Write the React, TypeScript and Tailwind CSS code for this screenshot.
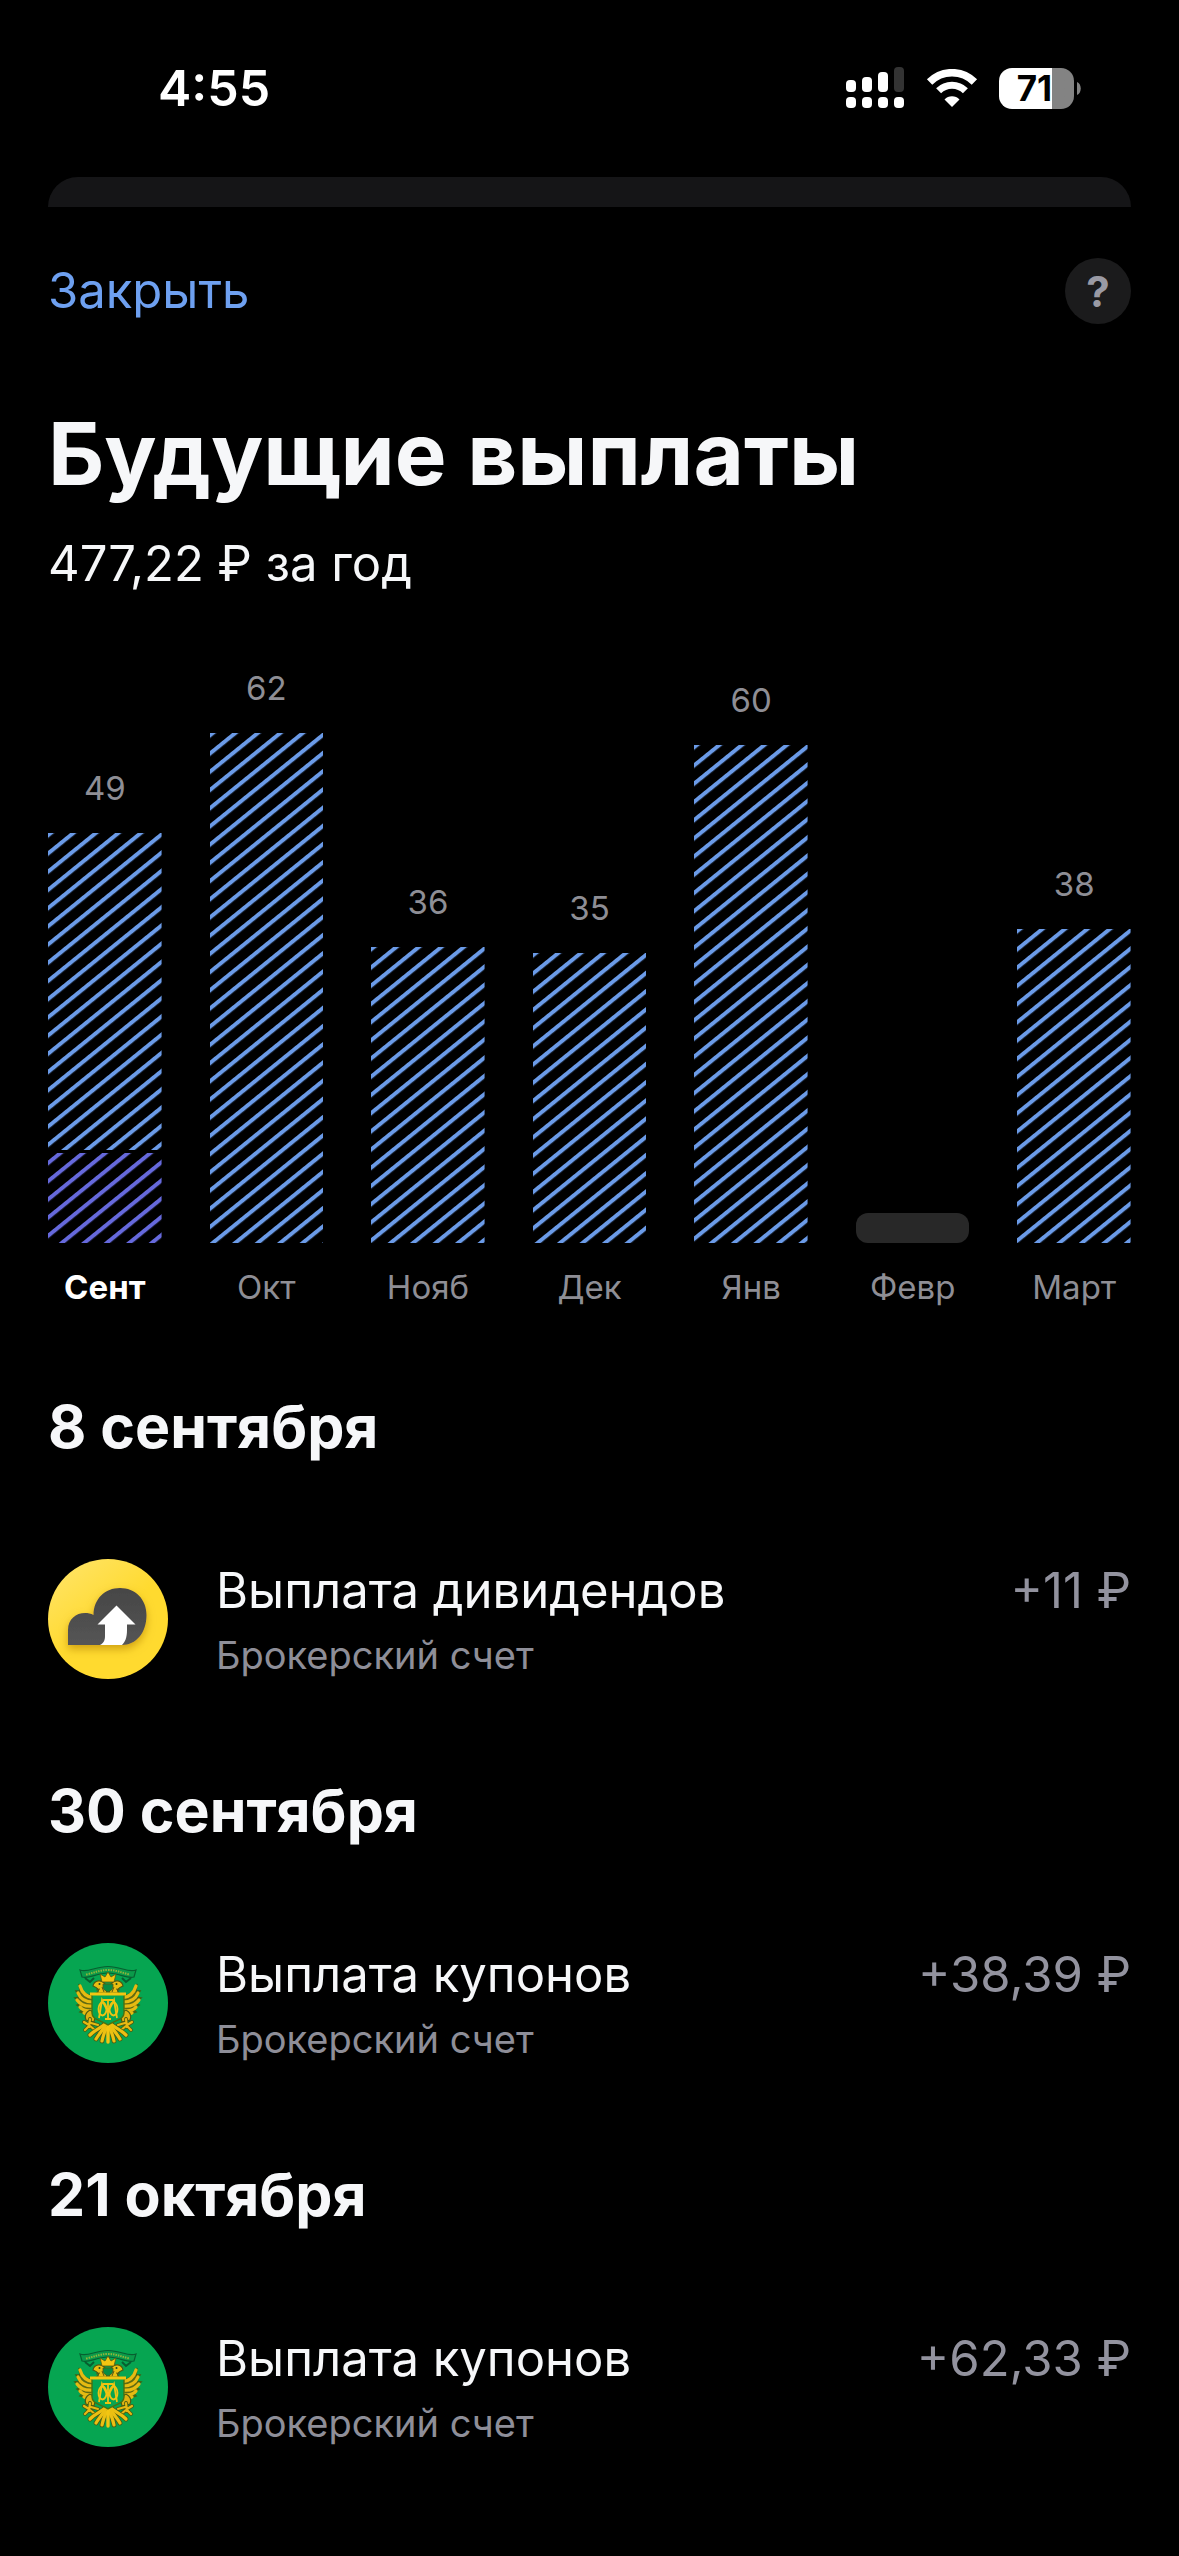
import React from "react";

interface Bar {
  month: string;
  value?: number;
  height: number;
  current?: number;
}

interface Payout {
  date: string;
  title: string;
  account: string;
  amount: string;
  logo: "cloud" | "emblem";
}

const bars: Bar[] = [
  { month: "Сент", value: 49, height: 410, current: 90 },
  { month: "Окт", value: 62, height: 510 },
  { month: "Нояб", value: 36, height: 296 },
  { month: "Дек", value: 35, height: 290 },
  { month: "Янв", value: 60, height: 498 },
  { month: "Февр", height: 30 },
  { month: "Март", value: 38, height: 314 },
];

const payouts: Payout[] = [
  { date: "8 сентября", title: "Выплата дивидендов", account: "Брокерский счет", amount: "+11 ₽", logo: "cloud" },
  { date: "30 сентября", title: "Выплата купонов", account: "Брокерский счет", amount: "+38,39 ₽", logo: "emblem" },
  { date: "21 октября", title: "Выплата купонов", account: "Брокерский счет", amount: "+62,33 ₽", logo: "emblem" },
];

const nextDate = "18 ноября";

function StatusBar() {
  return (
    <div className="flex items-center justify-between pt-14 pl-[158px] pr-[98px]">
      <span className="text-[50px] leading-16 font-semibold text-white">4:55</span>
      <div className="flex items-center gap-[21px]">
        {/* Dual SIM signal */}
        <svg width="59" height="42" viewBox="0 0 59 42" fill="#fff" aria-hidden="true">
          <rect x="0" y="13" width="10" height="12" rx="4" />
          <rect x="16" y="10" width="10" height="15" rx="4" />
          <rect x="32" y="5" width="10" height="20" rx="4" />
          <rect x="48" y="0" width="10" height="25" rx="4" fill="#333" />
          <rect x="0" y="30" width="10" height="11" rx="4" />
          <rect x="16" y="30" width="10" height="11" rx="4" />
          <rect x="32" y="30" width="10" height="11" rx="4" />
          <rect x="48" y="30" width="10" height="11" rx="4" />
        </svg>
        <svg width="52" height="38" viewBox="0 0 52 38" fill="none" stroke="#fff" aria-hidden="true">
          <path d="M3.6 13 A31.5 31.5 0 0 1 48.4 13" strokeWidth="7.5" />
          <path d="M12.6 21.8 A19 19 0 0 1 39.4 21.8" strokeWidth="7" />
          <path d="M26 38 L18.5 30.5 A10.5 10.5 0 0 1 33.5 30.5 Z" fill="#fff" stroke="none" />
        </svg>
        <div className="flex items-center gap-[3px]">
          <div className="flex h-[41px] w-[75px] items-center justify-center rounded-[13px] bg-linear-to-r from-white from-71% to-[#838383] to-71% pr-1">
            <span className="text-[35px] leading-10 font-bold text-black">71</span>
          </div>
          <svg width="4" height="13" viewBox="0 0 4 13" fill="#838383" aria-hidden="true">
            <path d="M0 0 C5 2 5 11 0 13 Z" />
          </svg>
        </div>
      </div>
    </div>
  );
}

function StripedBar({ bar }: { bar: Bar }) {
  const id = `stripes-${bar.value}`;
  const split = bar.height - (bar.current ?? 0);

  return (
    <svg className="w-full" height={bar.height} aria-hidden="true">
      <defs>
        <pattern id={`${id}-blue`} width="60" height="14.15" patternUnits="userSpaceOnUse" patternTransform="translate(0 18) rotate(-39)">
          <rect width="60" height="4" fill="#6b9be8" />
        </pattern>
        <pattern id={`${id}-violet`} width="60" height="14.15" patternUnits="userSpaceOnUse" patternTransform="translate(0 18) rotate(-39)">
          <rect width="60" height="4" fill="#6669dc" />
        </pattern>
      </defs>
      <rect width="100%" height={bar.current ? split - 3 : split} fill={`url(#${id}-blue)`} />
      {bar.current && <rect y={split} width="100%" height={bar.current} fill={`url(#${id}-violet)`} />}
    </svg>
  );
}

function Chart() {
  return (
    <div className="mt-18 flex items-end gap-12">
      {bars.map((bar, i) => (
        <div key={bar.month} className="flex flex-1 flex-col items-center">
          {bar.value && <span className="mb-[25px] text-[33px] leading-10 text-[#8e8e95]">{bar.value}</span>}
          {bar.value ? (
            <StripedBar bar={bar} />
          ) : (
            <div className="h-[30px] w-full rounded-xl bg-[#282828]" />
          )}
          <span className={`mt-6 text-[33px] leading-10 ${i === 0 ? "font-bold text-white" : "text-[#8e8e95]"}`}>
            {bar.month}
          </span>
        </div>
      ))}
    </div>
  );
}

function CloudLogo() {
  return (
    <svg className="size-30 shrink-0" viewBox="0 0 120 120" aria-hidden="true">
      <defs>
        <linearGradient id="cloud-bg" x1="0" y1="0" x2="0.6" y2="0.8">
          <stop offset="0" stopColor="#ffe56e" />
          <stop offset="0.7" stopColor="#ffda2f" />
        </linearGradient>
        <linearGradient id="cloud-fill" x1="0" y1="0" x2="0" y2="1">
          <stop offset="0" stopColor="#464646" />
          <stop offset="1" stopColor="#555" />
        </linearGradient>
        <filter id="cloud-shadow" x="-20%" y="-20%" width="140%" height="160%">
          <feDropShadow dx="0" dy="4" stdDeviation="4" floodColor="#b07c00" floodOpacity="0.6" />
        </filter>
      </defs>
      <circle cx="60" cy="60" r="60" fill="url(#cloud-bg)" />
      <path
        d="M20 86 V71 C20 60 28 54 37 54 C40 54 43 54.5 45.5 56 C45.5 40 57 29 72 29 C87 29 98.5 40 98.5 56 C98.5 74 88 86 74 86 Z"
        fill="url(#cloud-fill)"
        filter="url(#cloud-shadow)"
      />
      <path d="M68.5 46.5 L87.5 65.5 H79 V71 C79 79 77 83 74 86 H52 C56 84 57 81 57 77 V65.5 H49.5 Z" fill="#fff" />
    </svg>
  );
}

function EmblemHalf() {
  return (
    <g>
      {/* Wing */}
      <path
        d="M31 41 L36 50 L43 53 L49 50 V72 L44 75 L39 71 L32 69 L35 66 L29 62 L33 60 L27 55 L32 54 L28 48 L32 48 Z"
        fill="#5f6a12"
        stroke="#3d6414"
        strokeWidth="1.5"
      />
      <g fill="none" stroke="#e6ba12" strokeWidth="3.2" strokeLinecap="round">
        <path d="M46 55 C38 54 34 50 32 43" />
        <path d="M45 59 C37 59 32 55 30 50" />
        <path d="M45 63 C37 64 32 61 29 57" />
        <path d="M45 67 C39 69 34 67 32 64" />
        <path d="M46 71 C43 72 39 72 36 70" />
      </g>
      {/* Head and neck */}
      <path d="M45 43 C46 37 54 36 57 41 L59 50 H49 C52 47 50 45 45 43 Z" fill="#e9bd12" stroke="#4b5a12" strokeWidth="1.2" />
      <path d="M48 47 L52 46 M54 44 L56 49" stroke="#5c5a10" strokeWidth="1" />
      <circle cx="51.5" cy="41" r="1" fill="#1c4a1c" />
      {/* Leg and claws */}
      <path d="M42 67 C47 69 48 74 46 79 L38 77 C36 73 38 69 42 67 Z" fill="#dfb112" stroke="#4b5a12" strokeWidth="1.2" />
      <path d="M42 76 L41 84 M41 82 L36 79 M41 83 L37 87 M42 83 L47 87 M43 80 L50 82" stroke="#4b5a12" strokeWidth="3.8" strokeLinecap="round" fill="none" />
      <path d="M42 76 L41 84 M41 82 L36 79 M41 83 L37 87 M42 83 L47 87 M43 80 L50 82" stroke="#e6b912" strokeWidth="2.2" strokeLinecap="round" fill="none" />
      {/* Tail */}
      <g fill="none" stroke="#4b5a12" strokeWidth="4.8" strokeLinecap="round">
        <path d="M58 80 C54 85 48 86 42 92" />
        <path d="M58 82 C54 88 51 91 48 96" />
        <path d="M59 83 C56 90 55 93 54 98" />
      </g>
      <g fill="none" stroke="#ecc012" strokeWidth="3.2" strokeLinecap="round">
        <path d="M58 80 C54 85 48 86 42 92" />
        <path d="M58 82 C54 88 51 91 48 96" />
        <path d="M59 83 C56 90 55 93 54 98" />
      </g>
    </g>
  );
}

function EmblemLogo() {
  return (
    <svg className="size-30 shrink-0" viewBox="0 0 120 120" aria-hidden="true">
      <circle cx="60" cy="60" r="60" fill="#06a551" />
      <EmblemHalf />
      <g transform="translate(120 0) scale(-1 1)">
        <EmblemHalf />
      </g>
      <path d="M60 81 V99" stroke="#f2c612" strokeWidth="3.4" strokeLinecap="round" />
      {/* Ribbon */}
      <path d="M32 27 C40 30 47 23.5 60 23.5 C73 23.5 80 30 88 27 L86 34 C78 36 72 30 60 30 C48 30 42 36 34 34 Z" fill="#0b9a4a" stroke="#075f30" strokeWidth="1.2" />
      <path d="M38 31.5 C46 30 51 27 60 27 C69 27 74 30 82 31.5" fill="none" stroke="#8fb53a" strokeWidth="2" strokeDasharray="1.5 1" />
      <path d="M37 35 L42 39 L46 35 M83 35 L78 39 L74 35" fill="none" stroke="#075f30" strokeWidth="2" />
      {/* Crown */}
      <path d="M54 39 L52 31 L57 34 L60 29 L63 34 L68 31 L66 39 Z" fill="#f2c612" stroke="#5c5a10" strokeWidth="0.8" />
      <path d="M55 41 H65 V44 C65 47 62 48 60 49 C58 48 55 47 55 44 Z" fill="#078d44" stroke="#5c5a10" strokeWidth="0.8" />
      {/* Shield */}
      <path d="M44 51 H76 V70 C76 77 67 77 60 82 C53 77 44 77 44 70 Z" fill="#06a551" stroke="#49700f" strokeWidth="1.4" />
      <path d="M42 51 H78" stroke="#f2c612" strokeWidth="2.8" />
      <g fill="none" stroke="#efc312" strokeWidth="1.8">
        <ellipse cx="54.5" cy="66" rx="4" ry="6.5" />
        <ellipse cx="65.5" cy="66" rx="4" ry="6.5" />
        <path d="M51 75 L54 57 L60 69 L66 57 L69 75 M60 57 V76 M55 57 H65 M57 76 H63" />
      </g>
    </svg>
  );
}

function PayoutRow({ payout }: { payout: Payout }) {
  return (
    <section>
      <h2 className="text-[59px] leading-18 font-bold">{payout.date}</h2>
      <div className="mt-24 flex h-30 items-center gap-12">
        {payout.logo === "cloud" ? <CloudLogo /> : <EmblemLogo />}
        <div className="flex flex-1 flex-col">
          <div className="flex items-center justify-between text-[49px] leading-16">
            <span>{payout.title}</span>
            <span className="text-[#92929e]">{payout.amount}</span>
          </div>
          <span className="mt-2 text-[38px] leading-12 text-[#8e8e98]">{payout.account}</span>
        </div>
      </div>
    </section>
  );
}

export default function App() {
  return (
    <div className="h-screen overflow-hidden bg-black font-['Inter',sans-serif] text-[#f6f7f9]">
      <StatusBar />
      <div className="mx-12 mt-[57px] h-[30px] rounded-t-[30px] bg-[#151517]" />
      <main className="px-12">
        <header className="mt-[51px] flex items-center justify-between">
          <button type="button" className="text-[49px] leading-16 text-[#6ea0f0]">
            Закрыть
          </button>
          <button
            type="button"
            aria-label="Справка"
            className="flex size-[66px] items-center justify-center rounded-full bg-[#1b1b1c] text-[42px] font-bold text-[#9a9aa4]"
          >
            ?
          </button>
        </header>
        <h1 className="mt-[82px] text-[87px] leading-24 font-bold">Будущие выплаты</h1>
        <p className="mt-[30px] text-[49px] leading-16">477,22 ₽ за год</p>
        <Chart />
        <div className="mt-21 flex flex-col gap-24">
          {payouts.map((payout) => (
            <PayoutRow key={payout.date} payout={payout} />
          ))}
          <h2 className="text-[59px] leading-18 font-bold">{nextDate}</h2>
        </div>
      </main>
    </div>
  );
}
